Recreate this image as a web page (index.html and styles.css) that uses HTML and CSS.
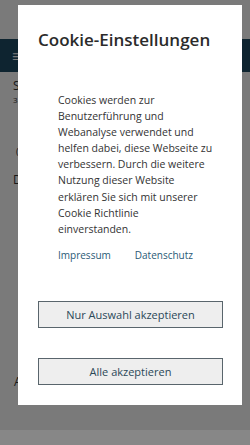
FILE: index.html
```html
<!DOCTYPE html>
<html lang="de">
<head>
<meta charset="utf-8">
<link rel="stylesheet" href="styles.css">
</head>
<body>
<div class="page">
  <div class="topbar"></div>
  <header class="header"><span class="burger">≡</span></header>
  <div class="content">
    <p class="c1">S</p>
    <p class="c2">3</p>
    <p class="c3">(</p>
    <p class="c4">D</p>
    <p class="c5">A</p>
  </div>
</div>
<div class="overlay"></div>
<div class="band"></div>
<div class="modal">
  <h1 class="title">Cookie-Einstellungen</h1>
  <p class="text">Cookies werden zur<br>Benutzerführung und<br>Webanalyse verwendet und<br>helfen dabei, diese Webseite zu<br>verbessern. Durch die weitere<br>Nutzung dieser Website<br>erklären Sie sich mit unserer<br>Cookie Richtlinie<br>einverstanden.</p>
  <div class="links">
    <a class="link">Impressum</a>
    <a class="link">Datenschutz</a>
  </div>
  <button class="btn btn-first">Nur Auswahl akzeptieren</button>
  <button class="btn btn-second">Alle akzeptieren</button>
</div>
</body>
</html>
```
FILE: styles.css
```css
html, body {
  margin: 0;
  padding: 0;
  height: 100%;
  overflow: hidden;
}
body {
  font-family: "Open Sans", "Noto Sans", sans-serif;
  background: #fff;
}
.page {
  height: 445px;
}
.topbar {
  height: 39px;
}
.header {
  height: 33px;
  background: #1f4b64;
  display: flex;
  align-items: center;
  padding-left: 12px;
}
.burger {
  color: #fff;
  font-size: 16px;
}
.content {
  padding-left: 13px;
  color: #333;
  font-size: 12px;
  line-height: 16px;
}
.content p { margin: 0; }
.c1 { padding-top: 6px; }
.c2 { font-size: 8px; line-height: 12px; }
.c3 { padding-top: 38px; padding-left: 3px; font-size: 9px; }
.c4 { padding-top: 12px; }
.c5 { padding-top: 186px; padding-left: 1px; }
.overlay {
  position: fixed;
  left: 0;
  top: 0;
  width: 250px;
  height: 430px;
  background: rgba(0, 0, 0, 0.52);
}
.band {
  position: fixed;
  left: 0;
  top: 430px;
  width: 250px;
  height: 15px;
  background: #878787;
}
.modal {
  position: fixed;
  left: 18px;
  top: 5px;
  width: 224px;
  height: 400px;
  background: #fff;
  box-sizing: border-box;
  padding: 23px 19px 0 20px;
  display: flex;
  flex-direction: column;
}
.title {
  margin: 0;
  font-size: 17px;
  font-weight: 600;
  color: #2b2b2b;
  line-height: 24px;
}
.text {
  margin: 40px 0 0 20px;
  font-size: 10.5px;
  line-height: 16.1px;
  color: #333;
  white-space: nowrap;
}
.links {
  margin: 10px 0 0 20px;
  display: flex;
  gap: 24px;
  font-size: 10px;
  line-height: 16px;
}
.link {
  color: #2a5a76;
}
.btn {
  display: block;
  width: 185px;
  height: 27px;
  box-sizing: border-box;
  border: 1px solid #59656c;
  background: #eeeeee;
  color: #2b4858;
  font-family: inherit;
  font-size: 11px;
  padding: 0;
}
.btn-first {
  margin-top: 38px;
}
.btn-second {
  margin-top: 30px;
}
```
